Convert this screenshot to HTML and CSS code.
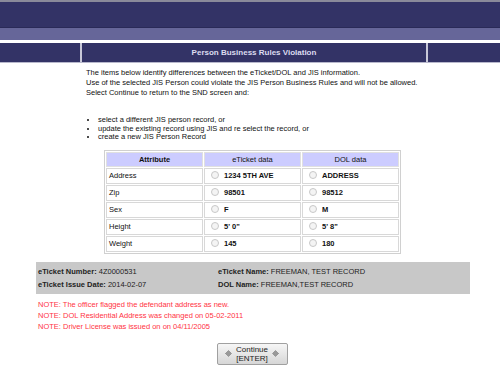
FILE: index.html
```html
<!DOCTYPE html>
<html lang="en">

<head>
    <meta charset="UTF-8">
    <title>Person Business Rules Violation</title>
    <link rel="stylesheet" href="styles.css">
</head>

<body>

    <!-- Header bars -->
    <div class="topbar"></div>
    <div class="subbar"></div>
    <div class="titlebar">
        <div class="side side-left"></div>
        <div class="title">Person Business Rules Violation</div>
        <div class="side side-right"></div>
    </div>

    <!-- Intro text -->
    <div class="intro">
        <p>The items below identify differences between the eTicket/DOL and JIS information.<br>
            Use of the selected JIS Person could violate the JIS Person Business Rules and will not be allowed.<br>
            Select Continue to return to the SND screen and:</p>
        <ul>
            <li>select a different JIS person record, or</li>
            <li>update the existing record using JIS and re select the record, or</li>
            <li>create a new JIS Person Record</li>
        </ul>
    </div>

    <!-- Differences table -->
    <table class="rules">
        <tr>
            <th class="attr">Attribute</th>
            <th>eTicket data</th>
            <th>DOL data</th>
        </tr>
        <tr>
            <td>Address</td>
            <td class="val"><span class="radio"></span>1234 5TH AVE</td>
            <td class="val"><span class="radio"></span>ADDRESS</td>
        </tr>
        <tr>
            <td>Zip</td>
            <td class="val"><span class="radio"></span>98501</td>
            <td class="val"><span class="radio"></span>98512</td>
        </tr>
        <tr>
            <td>Sex</td>
            <td class="val"><span class="radio"></span>F</td>
            <td class="val"><span class="radio"></span>M</td>
        </tr>
        <tr>
            <td>Height</td>
            <td class="val"><span class="radio"></span>5' 0"</td>
            <td class="val"><span class="radio"></span>5' 8"</td>
        </tr>
        <tr>
            <td>Weight</td>
            <td class="val"><span class="radio"></span>145</td>
            <td class="val"><span class="radio"></span>180</td>
        </tr>
    </table>

    <!-- Ticket info -->
    <div class="info">
        <div><b>eTicket Number:</b> 4Z0000531</div>
        <div><b>eTicket Name:</b> FREEMAN, TEST RECORD</div>
        <div><b>eTicket Issue Date:</b> 2014-02-07</div>
        <div><b>DOL Name:</b> FREEMAN,TEST RECORD</div>
    </div>

    <div class="notes">
        <div>NOTE: The officer flagged the defendant address as new.</div>
        <div>NOTE: DOL Residential Address was changed on 05-02-2011</div>
        <div>NOTE: Driver License was issued on on 04/11/2005</div>
    </div>

    <div class="actions">
        <button class="btn" type="button">
            <svg width="7" height="7" viewBox="0 0 7 7"><path d="M0 3.5h3M3.5 0.5l3 3-3 3-3-3z" fill="#999" stroke="#999" stroke-width="1"/></svg>
            <span>Continue<br>[ENTER]</span>
            <svg width="7" height="7" viewBox="0 0 7 7"><path d="M7 3.5h-3M3.5 0.5l3 3-3 3-3-3z" fill="#999" stroke="#999" stroke-width="1"/></svg>
        </button>
    </div>

</body>

</html>
```

FILE: styles.css
```css
body {
    margin: 0;
    padding: 0;
    background-color: #ffffff;
    font-family: 'Liberation Sans', Arial, sans-serif;
    font-size: 7.5px;
    color: #111111;
}

/* Header bars */
.topbar {
    height: 25px;
    background-color: #333366;
    border-top: 2px solid #8a8a9a;
    border-bottom: 1px solid #2a2a58;
}

.subbar {
    height: 12px;
    background-color: #666699;
    margin-bottom: 3px;
}

.titlebar {
    display: flex;
    height: 19px;
    border-bottom: 1px solid #b8b8cc;
}

.titlebar .side,
.titlebar .title {
    background-color: #333366;
}

.side-left {
    width: 80px;
    border-right: 2px solid #c8c8d8;
}

.side-right {
    width: 72px;
    border-left: 2px solid #c8c8d8;
}

.title {
    flex: 1;
    display: flex;
    justify-content: center;
    align-items: center;
    color: #dcdcf0;
    font-weight: bold;
    font-size: 8px;
}

/* Intro */
.intro {
    padding: 5px 0 0 86px;
}

.intro p {
    margin: 0;
    line-height: 10px;
}

.intro ul {
    margin: 18px 0 0 0;
    padding-left: 12px;
    line-height: 8.5px;
}

/* Table */
.rules {
    margin: 8px 0 0 104px;
    width: 297px;
    table-layout: fixed;
    border: 1px solid #d0d0d0;
    border-spacing: 1px;
}

.rules th {
    width: 33.3%;
    background-color: #ccccff;
    height: 13px;
    font-weight: normal;
    border: 1px solid #e0e0e0;
    padding: 0;
}

.rules th.attr {
    font-weight: bold;
}

.rules td {
    height: 14px;
    border: 1px solid #d8d8d8;
    padding: 0 2px;
}

.rules td.val {
    font-weight: bold;
    padding-left: 6px;
}

.radio {
    display: inline-block;
    width: 6px;
    height: 6px;
    border: 1px solid #c8c8c8;
    border-radius: 50%;
    background-color: #f4f4f4;
    margin-right: 5px;
    vertical-align: -1px;
}

/* Ticket info */
.info {
    display: grid;
    grid-template-columns: 180px 1fr;
    row-gap: 4px;
    margin: 8px 30px 0 36px;
    padding: 5px 2px;
    background-color: #c8c8c8;
    color: #222222;
}

.notes {
    margin: 5px 0 0 38px;
    color: #ff3344;
    line-height: 11px;
}

.actions {
    display: flex;
    justify-content: center;
    margin-top: 11px;
    padding-left: 4px;
}

.btn {
    display: flex;
    align-items: center;
    gap: 4px;
    width: 71px;
    height: 22px;
    justify-content: center;
    padding: 0;
    font-family: 'Liberation Sans', Arial, sans-serif;
    font-size: 8px;
    line-height: 9px;
    color: #222222;
    border: 1px solid #a0a0a0;
    border-radius: 2px;
    background: linear-gradient(#f6f6f6, #d6d6d6);
}
```
